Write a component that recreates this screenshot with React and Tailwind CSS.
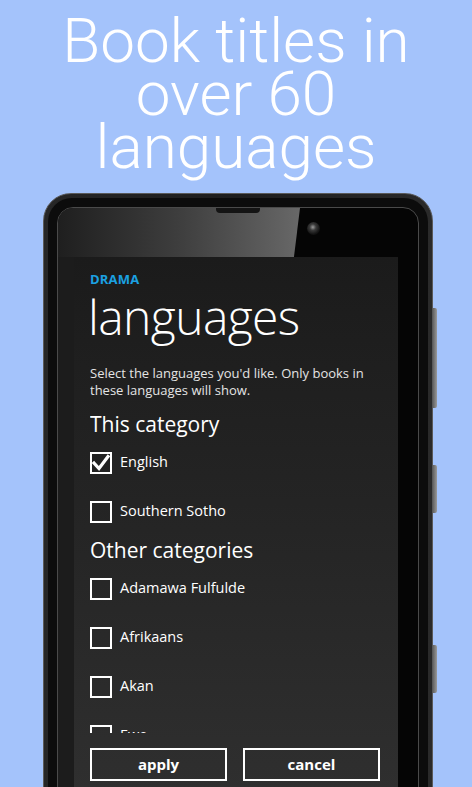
const body = { fontFamily: '"Open Sans", "Noto Sans", sans-serif' };

function Checkbox({ checked }) {
  return (
    <span className="relative flex h-[22px] w-[22px] shrink-0 items-center justify-center border-2 border-white">
      {checked && (
        <svg viewBox="0 0 22 22" className="absolute -left-[2px] -top-[2px] h-[22px] w-[22px]">
          <polyline points="4,11 9,16.5 18,4.5" fill="none" stroke="white" strokeWidth="3.2" strokeLinecap="square" />
        </svg>
      )}
    </span>
  );
}

function Option({ label, checked }) {
  return (
    <label className="flex h-[49px] items-center gap-[8px]">
      <Checkbox checked={checked} />
      <span className="text-[14.5px] leading-none text-white">{label}</span>
    </label>
  );
}

function Screen() {
  return (
    <div className="flex h-[560px] flex-col bg-gradient-to-b from-[#1b1b1b] to-[#303030] pl-[16px] pr-[18px]" style={body}>
      <div className="h-[476px] overflow-hidden pt-[15px]">
        <p className="text-[13px] font-bold leading-[14px] tracking-[0.2px] text-[#1ba1e2]">DRAMA</p>
        <h2 className="-ml-[2px] mt-[3px] text-[48px] font-light leading-[55px] tracking-[-0.6px] text-white">languages</h2>
        <p className="mt-[21px] text-[13px] leading-[17px] text-[#e4e4e4]">
          Select the languages you'd like. Only books in
          <br />
          these languages will show.
        </p>
        <p className="mt-[12px] text-[21px] leading-[27px] text-white">This category</p>
        <Option label="English" checked />
        <Option label="Southern Sotho" />
        <p className="text-[21px] leading-[28px] text-white">Other categories</p>
        <Option label="Adamawa Fulfulde" />
        <Option label="Afrikaans" />
        <Option label="Akan" />
        <Option label="Ewe" />
      </div>
      <div className="mt-[15px] grid grid-cols-2 gap-[16px]">
        <button className="h-[33px] border-2 border-white text-[15px] font-bold text-white">apply</button>
        <button className="h-[33px] border-2 border-white text-[15px] font-bold text-white">cancel</button>
      </div>
    </div>
  );
}

function Phone() {
  return (
    <div className="relative ml-[43px] mt-[20px] w-[390px] self-start">
      {/* side keys */}
      <div className="absolute -right-[4px] top-[115px] h-[100px] w-[5px] rounded-r-[2px] bg-gradient-to-r from-[#555] to-[#9a9a9a]" />
      <div className="absolute -right-[4px] top-[272px] h-[48px] w-[5px] rounded-r-[2px] bg-gradient-to-r from-[#555] to-[#9a9a9a]" />
      <div className="absolute -right-[4px] top-[452px] h-[48px] w-[5px] rounded-r-[2px] bg-gradient-to-r from-[#555] to-[#9a9a9a]" />

      <div className="relative rounded-t-[28px] border border-[#5a5a5a] bg-gradient-to-r from-[#262626] via-[#1e1e1e] to-[#2a2a2a] px-[4px] pt-[4px]">
        <div className="rounded-t-[24px] bg-[#0c0c0c] px-[9px] pt-[9px]">
          <div className="relative h-[620px] overflow-hidden rounded-t-[16px] border border-[#4a4a4a] bg-[#050505] pl-[16px] pr-[20px] pt-[49px]">
            {/* glare across the top bezel */}
            <div className="absolute left-0 top-0 h-[49px] w-[242px] bg-gradient-to-r from-[#1f1f1f] via-[#3e3e3e] to-[#686868] [clip-path:polygon(0_0,100%_0,97.5%_100%,0_100%)]" />
            <div className="absolute left-0 top-[49px] h-full w-[16px] bg-[#1c1c1c]" />
            {/* earpiece slot */}
            <div className="absolute left-[158px] top-0 h-[5px] w-[44px] rounded-b-[4px] bg-[#141414]" />
            {/* front camera */}
            <div className="absolute left-[249px] top-[14px] h-[13px] w-[13px] rounded-full bg-[radial-gradient(circle_at_45%_40%,#9a9a9a_0%,#3a3a3a_30%,#141414_65%,#050505_100%)]" />
            <div className="relative">
              <Screen />
            </div>
          </div>
        </div>
      </div>
    </div>
  );
}

export default function App() {
  return (
    <div className="flex h-[787px] w-[472px] flex-col items-center overflow-hidden bg-[#a4c3fb]">
      <h1
        className="mt-[14px] text-center text-[62px] font-light leading-[53px] text-white"
        style={{ fontFamily: 'Roboto, "Liberation Sans", sans-serif' }}
      >
        Book titles in
        <br />
        over 60
        <br />
        languages
      </h1>
      <Phone />
    </div>
  );
}
